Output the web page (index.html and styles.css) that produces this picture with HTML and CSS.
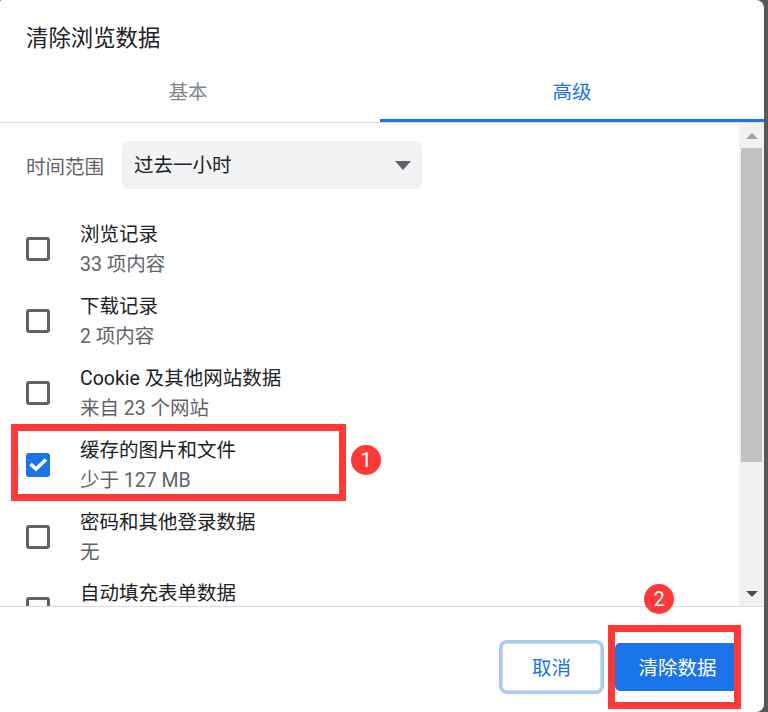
FILE: index.html
```html
<!DOCTYPE html>
<html lang="zh-CN">
<head>
    <meta charset="UTF-8">
    <title>清除浏览数据</title>
    <link rel="stylesheet" href="styles.css">
</head>
<body>
    <div id="dialog">
        <div class="dialog-title">清除浏览数据</div>
        <div class="tabs">
            <div class="tab">基本</div>
            <div class="tab tab-active">高级</div>
        </div>
        <div class="content">
            <div class="scroll-area">
                <div class="range-row">
                    <span class="range-label">时间范围</span>
                    <div class="range-select">
                        <span>过去一小时</span>
                        <span class="select-arrow"></span>
                    </div>
                </div>
                <div class="check-row">
                    <span class="checkbox"></span>
                    <div class="check-text">
                        <div class="check-title">浏览记录</div>
                        <div class="check-sub">33 项内容</div>
                    </div>
                </div>
                <div class="check-row">
                    <span class="checkbox"></span>
                    <div class="check-text">
                        <div class="check-title">下载记录</div>
                        <div class="check-sub">2 项内容</div>
                    </div>
                </div>
                <div class="check-row">
                    <span class="checkbox"></span>
                    <div class="check-text">
                        <div class="check-title">Cookie 及其他网站数据</div>
                        <div class="check-sub">来自 23 个网站</div>
                    </div>
                </div>
                <div class="check-row">
                    <span class="checkbox checked">
                        <svg width="24" height="24" viewBox="0 0 24 24"><path d="M4.5 11l5.5 5 10-9.5" fill="none" stroke="#fff" stroke-width="3.5"/></svg>
                    </span>
                    <div class="check-text">
                        <div class="check-title">缓存的图片和文件</div>
                        <div class="check-sub">少于 127 MB</div>
                    </div>
                </div>
                <div class="check-row">
                    <span class="checkbox"></span>
                    <div class="check-text">
                        <div class="check-title">密码和其他登录数据</div>
                        <div class="check-sub">无</div>
                    </div>
                </div>
                <div class="check-row">
                    <span class="checkbox"></span>
                    <div class="check-text check-text-cut">
                        <div class="check-title">自动填充表单数据</div>
                    </div>
                </div>
            </div>
            <div class="scrollbar">
                <div class="scroll-up"></div>
                <div class="scroll-thumb"></div>
                <div class="scroll-track"></div>
                <div class="scroll-down"></div>
            </div>
        </div>
        <div class="footer">
            <button class="btn btn-cancel">取消</button>
            <button class="btn btn-confirm">清除数据</button>
        </div>
        <!-- red annotations on top of the dialog -->
        <div class="mark-box mark-box-1"></div>
        <div class="mark-dot mark-dot-1">1</div>
        <div class="mark-box mark-box-2"></div>
        <div class="mark-dot mark-dot-2">2</div>
    </div>
</body>
</html>
```

FILE: styles.css
```css
html, body {
    margin: 0;
    padding: 0;
    height: 100%;
    overflow: hidden;
}
body {
    background-color: #585858;
    color: #202124;
    font-family: Roboto, "Noto Sans CJK SC", sans-serif;
    font-size: 19.5px;
}
#dialog {
    position: relative;
    width: 764px;
    height: 712px;
    display: flex;
    flex-direction: column;
    background-color: white;
    border-radius: 2px 8px 8px 0;
    overflow: hidden;
}
.dialog-title {
    height: 62px;
    padding: 18px 0 0 26px;
    box-sizing: border-box;
    font-size: 22.4px;
    line-height: 40px;
    flex: none;
}
.tabs {
    display: flex;
    height: 61px;
    box-sizing: border-box;
    border-bottom: 1px solid #dadce0;
    flex: none;
}
.tab {
    width: 380px;
    box-sizing: border-box;
    padding-right: 4px;
    text-align: center;
    line-height: 62px;
    color: #80868b;
    flex: none;
}
.tab-active {
    width: 384px;
    height: 60px;
    padding-right: 0;
    color: #1a73e8;
    border-bottom: 3px solid #1a73e8;
}
.content {
    display: flex;
    height: 483px;
    flex: none;
}
.scroll-area {
    width: 739px;
    overflow: hidden;
    flex: none;
}
.range-row {
    display: flex;
    align-items: center;
    gap: 18px;
    padding: 18px 0 24px 26px;
}
.range-label {
    color: #5f6368;
    width: 78px;
    white-space: nowrap;
}
.range-select {
    width: 300px;
    height: 48px;
    box-sizing: border-box;
    padding: 0 11px 3px 12px;
    display: flex;
    align-items: center;
    justify-content: space-between;
    background-color: #f1f3f4;
    border-radius: 6px;
}
.select-arrow {
    width: 0;
    height: 0;
    margin-top: 3px;
    border-left: 8px solid transparent;
    border-right: 8px solid transparent;
    border-top: 9px solid #5f6368;
}
.check-row {
    display: flex;
    align-items: center;
    gap: 30px;
    height: 72px;
    padding-left: 26px;
}
.checkbox {
    width: 24px;
    height: 24px;
    box-sizing: border-box;
    border: 3px solid #5f6368;
    border-radius: 3px;
    flex: none;
}
.checkbox.checked {
    border: none;
    background-color: #1a73e8;
}
.checkbox svg {
    display: block;
}
.check-text {
    line-height: 30px;
    padding-top: 1px;
}
.check-text-cut {
    align-self: flex-start;
    padding-top: 9px;
    line-height: 24px;
}
.check-sub {
    color: #5f6368;
}
.scrollbar {
    width: 25px;
    display: flex;
    flex-direction: column;
    align-items: center;
    background-color: #f1f1f1;
    flex: none;
}
.scroll-up, .scroll-down {
    height: 25px;
    display: flex;
    align-items: center;
    justify-content: center;
    flex: none;
}
.scroll-up::before {
    content: "";
    border-left: 6px solid transparent;
    border-right: 6px solid transparent;
    border-bottom: 6px solid #a3a3a3;
}
.scroll-down::before {
    content: "";
    border-left: 6px solid transparent;
    border-right: 6px solid transparent;
    border-top: 6px solid #505050;
}
.scroll-thumb {
    width: 21px;
    height: 314px;
    background-color: #c1c1c1;
    flex: none;
}
.scroll-track {
    flex: 1;
}
.footer {
    flex: 1;
    display: flex;
    justify-content: flex-end;
    align-items: flex-start;
    gap: 14px;
    padding: 36px 24px 0 0;
    border-top: 1px solid #dadce0;
}
.btn {
    height: 48px;
    margin: 0;
    padding: 0 0 2px;
    border: none;
    border-radius: 5px;
    font-family: inherit;
    font-size: 19.5px;
    cursor: pointer;
}
.btn-cancel {
    width: 99px;
    background-color: white;
    color: #1a73e8;
    border: 1px solid #dadce0;
    box-shadow: 0 0 0 3px #a8cbf6;
}
.btn-confirm {
    width: 125px;
    background-color: #1a73e8;
    color: white;
}
.mark-box {
    position: absolute;
    box-sizing: border-box;
    border: 7px solid #ff3838;
}
.mark-box-1 {
    left: 11px;
    top: 424px;
    width: 335px;
    height: 77px;
}
.mark-box-2 {
    left: 608px;
    top: 625px;
    width: 133px;
    height: 84px;
}
.mark-dot {
    position: absolute;
    width: 30px;
    height: 30px;
    border-radius: 50%;
    background-color: #ff3838;
    color: white;
    font-size: 20px;
    line-height: 30px;
    text-align: center;
}
.mark-dot-1 {
    left: 351px;
    top: 445px;
}
.mark-dot-2 {
    left: 644px;
    top: 584px;
}
```
